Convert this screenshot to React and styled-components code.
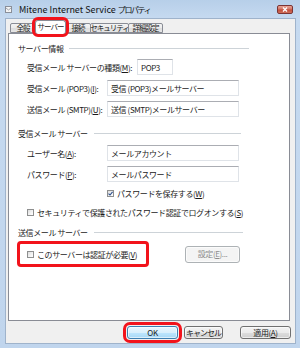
import React from 'react';
import styled, { createGlobalStyle } from 'styled-components';

const GlobalStyle = createGlobalStyle`
  html, body {
    margin: 0;
    padding: 0;
    background: #fff;
  }
  body {
    font-family: "Noto Sans CJK JP", "Noto Sans", sans-serif;
    font-size: 8px;
    letter-spacing: -0.4px;
    color: #1a1a1a;
  }
`;

const Window = styled.div`
  width: 300px;
  height: 348px;
  box-sizing: border-box;
  display: flex;
  flex-direction: column;
  padding: 0 5px 5px 6px;
  background: linear-gradient(180deg, #b7cfe9 0, #c6daf0 19px, #c0d5ed 100%);
`;

const TitleBar = styled.div`
  height: 19px;
  display: flex;
  align-items: center;
  flex-shrink: 0;
`;

const TitleIcon = styled.svg`
  width: 7px;
  height: 7px;
  flex-shrink: 0;
  margin-left: -1px;
  margin-right: 7px;
`;

const TitleText = styled.span`
  font-size: 9px;
  letter-spacing: 0;
  color: #111;
  white-space: nowrap;
`;

const TitleJa = styled.span`
  font-size: 8px;
  letter-spacing: -1.4px;
`;

const CloseButton = styled.div`
  margin-left: auto;
  margin-right: 2px;
  width: 16px;
  height: 9px;
  box-sizing: border-box;
  border: 1px solid #7b3434;
  border-radius: 2px;
  background: linear-gradient(180deg, #e8a496 0%, #d47665 45%, #c24c3a 55%, #d0705b 100%);
  display: flex;
  align-items: center;
  justify-content: center;
`;

const Client = styled.div`
  flex: 1;
  display: flex;
  flex-direction: column;
  background: #f0f0f0;
  padding: 1px 5px 0 2px;
  box-shadow: 0 0 0 1px #9fb3cb;
`;

const TabStrip = styled.div`
  height: 13px;
  display: flex;
  align-items: flex-end;
  padding-left: 2px;
  flex-shrink: 0;
`;

const Tab = styled.div`
  width: ${p => p.$w}px;
  height: ${p => (p.$active ? 14 : 10)}px;
  margin-bottom: ${p => (p.$active ? -1 : 0)}px;
  margin-left: -1px;
  box-sizing: border-box;
  border: 1px solid #898c95;
  border-bottom: ${p => (p.$active ? 'none' : '1px solid #898c95')};
  background: ${p => (p.$active ? '#fff' : 'linear-gradient(180deg, #f3f3f3 0%, #ebebeb 50%, #dedede 51%, #e5e5e5 100%)')};
  display: flex;
  align-items: center;
  justify-content: center;
  white-space: nowrap;
  overflow: visible;
  font-size: 7.5px;
  letter-spacing: -1px;
  line-height: 1;
  padding-bottom: ${p => (p.$active ? 1 : 0)}px;
  position: relative;
  z-index: ${p => (p.$active ? 2 : 0)};
  outline: ${p => (p.$marked ? '3px solid #f2131b' : 'none')};
  border-radius: ${p => (p.$marked ? '3px' : '2px 2px 0 0')};
  &:first-child {
    margin-left: 0;
  }
`;

const Panel = styled.div`
  height: 288px;
  box-sizing: border-box;
  border: 1px solid #898c95;
  background: #fff;
  padding: 8px 49px 0 9px;
  flex-shrink: 0;
`;

const GroupHead = styled.div`
  display: flex;
  align-items: center;
  height: 12px;
  white-space: nowrap;
  margin-top: ${p => p.$mt || 0}px;
  margin-right: ${p => -(p.$ext || 0)}px;
  &::after {
    content: '';
    flex: 1;
    height: 0;
    border-top: 1px solid #cdd3d8;
    margin-left: ${p => p.$gap || 5}px;
  }
`;

const Row = styled.div`
  display: flex;
  align-items: center;
  height: 16px;
  margin-top: ${p => p.$mt || 0}px;
  padding-left: 9px;
`;

const Label = styled.span`
  width: ${p => p.$w}px;
  flex-shrink: 0;
  white-space: nowrap;
`;

const TextBox = styled.div`
  width: ${p => p.$w}px;
  height: 16px;
  box-sizing: border-box;
  border: 1px solid #dfe3e8;
  border-top-color: #abadb3;
  background: #fff;
  padding-left: 3px;
  display: flex;
  align-items: center;
  white-space: nowrap;
  color: #222;
`;

const U = styled.span`
  text-decoration: underline;
`;

const CheckRow = styled.label`
  display: flex;
  align-items: center;
  height: 12px;
  margin-top: ${p => p.$mt || 0}px;
  padding-left: ${p => p.$indent}px;
  white-space: nowrap;
`;

const CheckBox = styled.span`
  width: 7px;
  height: 7px;
  flex-shrink: 0;
  box-sizing: border-box;
  border: 1px solid #8e8f8f;
  background: linear-gradient(135deg, #dcdcdc 0%, #f4f4f4 60%, #fff 100%);
  margin-right: 3px;
  display: flex;
  align-items: center;
  justify-content: center;
`;

const ActionRow = styled.div`
  display: flex;
  align-items: center;
  justify-content: space-between;
  margin-top: ${p => p.$mt || 0}px;
`;

const Marked = styled.div`
  width: 132px;
  height: 26px;
  box-sizing: border-box;
  margin-left: -1px;
  border: 3px solid #f2131b;
  border-radius: 4px;
  padding-left: 7px;
  display: flex;
  align-items: center;
`;

const Button = styled.button`
  width: ${p => p.$w}px;
  height: ${p => p.$h || 13}px;
  margin-left: ${p => p.$ml || 0}px;
  padding: 0;
  box-sizing: border-box;
  font-family: inherit;
  font-size: 8px;
  letter-spacing: ${p => p.$ls ?? -0.4}px;
  white-space: nowrap;
  line-height: 1;
  color: ${p => (p.disabled ? '#8d8d8d' : '#1a1a1a')};
  border: 1px solid ${p => (p.disabled ? '#adb2b5' : p.$default ? '#3c7fb1' : '#707070')};
  border-radius: 3px;
  background: ${p =>
    p.disabled
      ? '#f4f4f4'
      : p.$default
      ? 'linear-gradient(180deg, #eaf6fd 0%, #d9f0fc 50%, #bee6fd 51%, #a7d9f5 100%)'
      : 'linear-gradient(180deg, #f2f2f2 0%, #ebebeb 50%, #dddddd 51%, #cfcfcf 100%)'};
  outline: ${p => (p.$marked ? '3px solid #f2131b' : 'none')};
  outline-offset: 1px;
  box-shadow: inset 0 0 0 1px rgba(255, 255, 255, 0.6);
`;

const ButtonBar = styled.div`
  height: 13px;
  margin: 5px -1px 4px 0;
  display: flex;
  justify-content: flex-end;
  flex-shrink: 0;
`;

const tabs = [
  { name: '全般', w: 26 },
  { name: 'サーバー', w: 31, active: true },
  { name: '接続', w: 26 },
  { name: 'セキュリティ', w: 39 },
  { name: '詳細設定', w: 35 },
];

const CheckMark = () => (
  <svg width="5" height="5" viewBox="0 0 5 5">
    <path d="M0.5 2.6 L2 4 L4.6 0.8" fill="none" stroke="#2b4e8c" strokeWidth="1.1" />
  </svg>
);

const App = () => {
  return (
    <>
      <GlobalStyle />
      <Window>
        <TitleBar>
          <TitleIcon viewBox="0 0 7 7">
            <rect x="0.5" y="0.5" width="6" height="6" fill="#f4f4f4" stroke="#8a8f99" />
            <path d="M1 2 L3.5 4 L6 2" fill="none" stroke="#8a8f99" strokeWidth="0.8" />
          </TitleIcon>
          <TitleText>
            Mitene Internet Service <TitleJa>プロパティ</TitleJa>
          </TitleText>
          <CloseButton>
            <svg width="6" height="5" viewBox="0 0 6 5">
              <path d="M1 0.5 L5 4.5 M5 0.5 L1 4.5" stroke="#fff" strokeWidth="1.3" />
            </svg>
          </CloseButton>
        </TitleBar>

        <Client>
          <TabStrip>
            {tabs.map(t => (
              <Tab key={t.name} $w={t.w} $active={t.active} $marked={t.active}>
                {t.name}
              </Tab>
            ))}
          </TabStrip>

          <Panel>
            <GroupHead $ext={9} $gap={5}>サーバー情報</GroupHead>
            <Row $mt={5}>
              <Label $w={110}>
                受信メール サーバーの種類(<U>M</U>):
              </Label>
              <TextBox $w={36}>POP3</TextBox>
            </Row>
            <Row $mt={5}>
              <Label $w={80}>
                受信メール (POP3)(<U>I</U>):
              </Label>
              <TextBox $w={132}>受信 (POP3)メールサーバー</TextBox>
            </Row>
            <Row $mt={5}>
              <Label $w={80}>
                送信メール (SMTP)(<U>U</U>):
              </Label>
              <TextBox $w={132}>送信 (SMTP)メールサーバー</TextBox>
            </Row>

            <GroupHead $mt={10} $ext={1} $gap={6}>受信メール サーバー</GroupHead>
            <Row $mt={6}>
              <Label $w={80}>
                ユーザー名(<U>A</U>):
              </Label>
              <TextBox $w={132}>メールアカウント</TextBox>
            </Row>
            <Row $mt={5}>
              <Label $w={80}>
                パスワード(<U>P</U>):
              </Label>
              <TextBox $w={132}>メールパスワード</TextBox>
            </Row>
            <CheckRow $mt={5} $indent={89}>
              <CheckBox>
                <CheckMark />
              </CheckBox>
              パスワードを保存する(<U>W</U>)
            </CheckRow>
            <CheckRow $mt={7} $indent={9}>
              <CheckBox />
              セキュリティで保護されたパスワード認証でログオンする(<U>S</U>)
            </CheckRow>

            <GroupHead $mt={8} $ext={3} $gap={6}>送信メール サーバー</GroupHead>
            <ActionRow $mt={3}>
              <Marked>
                <CheckRow $indent={0}>
                  <CheckBox />
                  このサーバーは認証が必要(<U>V</U>)
                </CheckRow>
              </Marked>
              <Button disabled $w={55} $h={17}>
                設定(<U>E</U>)...
              </Button>
            </ActionRow>
          </Panel>

          <ButtonBar>
            <Button $w={51} $default $marked>
              OK
            </Button>
            <Button $w={39} $ml={6} $ls={-1}>
              キャンセル
            </Button>
            <Button $w={51} $ml={17}>
              適用(<U>A</U>)
            </Button>
          </ButtonBar>
        </Client>
      </Window>
    </>
  );
};

export default App;
